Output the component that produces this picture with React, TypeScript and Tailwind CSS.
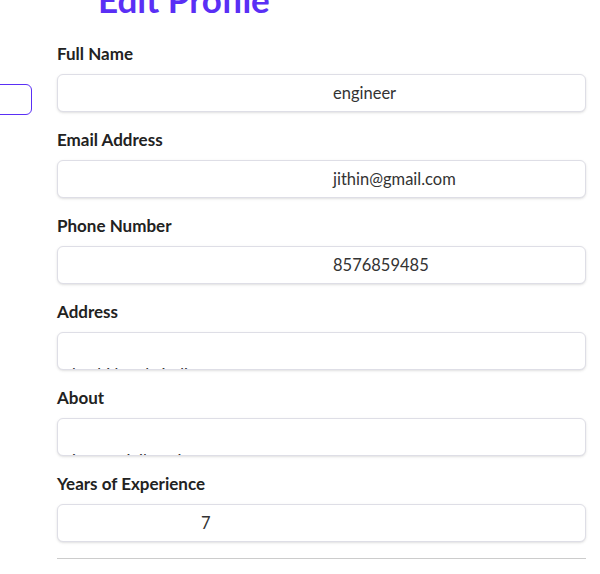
import React from 'react';

type Field = {
  label: string;
  value: string;
  indent: string;
  multiline?: boolean;
};

const fields: Field[] = [
  { label: 'Full Name', value: 'engineer', indent: 'pl-[275px]' },
  { label: 'Email Address', value: 'jithin@gmail.com', indent: 'pl-[275px]' },
  { label: 'Phone Number', value: '8576859485', indent: 'pl-[275px]' },
  { label: 'Address', value: 'kochi kerala india', indent: 'pl-[14px]', multiline: true },
  { label: 'About', value: 'i am a civil engineer', indent: 'pl-[14px]', multiline: true },
  { label: 'Years of Experience', value: '7', indent: 'pl-[143px]' },
];

function FormField({ field }: { field: Field }) {
  return (
    <div className="flex flex-col">
      <label className="h-[24px] text-[17px] font-bold leading-[24px] text-[#222222]">
        {field.label}
      </label>
      <div
        className={[
          'mt-2 h-[38px] overflow-hidden rounded-md border border-[#dedee6] bg-white text-[16.5px] text-[#333333] shadow-sm',
          field.indent,
          field.multiline ? 'pt-[32px] leading-[20px]' : 'flex items-center',
        ].join(' ')}
      >
        {field.value}
      </div>
    </div>
  );
}

export default function App() {
  return (
    <div className="flex min-h-[574px] w-[600px] overflow-hidden bg-white font-['Lato',sans-serif]">
      {/* sidebar stub, mostly scrolled out of view */}
      <div className="w-[31px] shrink-0 pt-[84px]">
        <div className="-ml-[20px] h-[31px] w-[52px] rounded-md border border-[#5a2ff5]" />
      </div>

      <div className="ml-[26px] flex w-[529px] flex-col">
        <h1 className="-mt-[22px] ml-[41px] h-[42px] text-[35px] font-bold leading-[42px] text-[#5a2ff5]">
          Edit Profile
        </h1>

        <div className="mt-[22px] flex flex-col gap-4">
          {fields.map((f) => (
            <FormField key={f.label} field={f} />
          ))}
        </div>

        <hr className="mt-4 border-t border-[#cccccc]" />
      </div>
    </div>
  );
}
